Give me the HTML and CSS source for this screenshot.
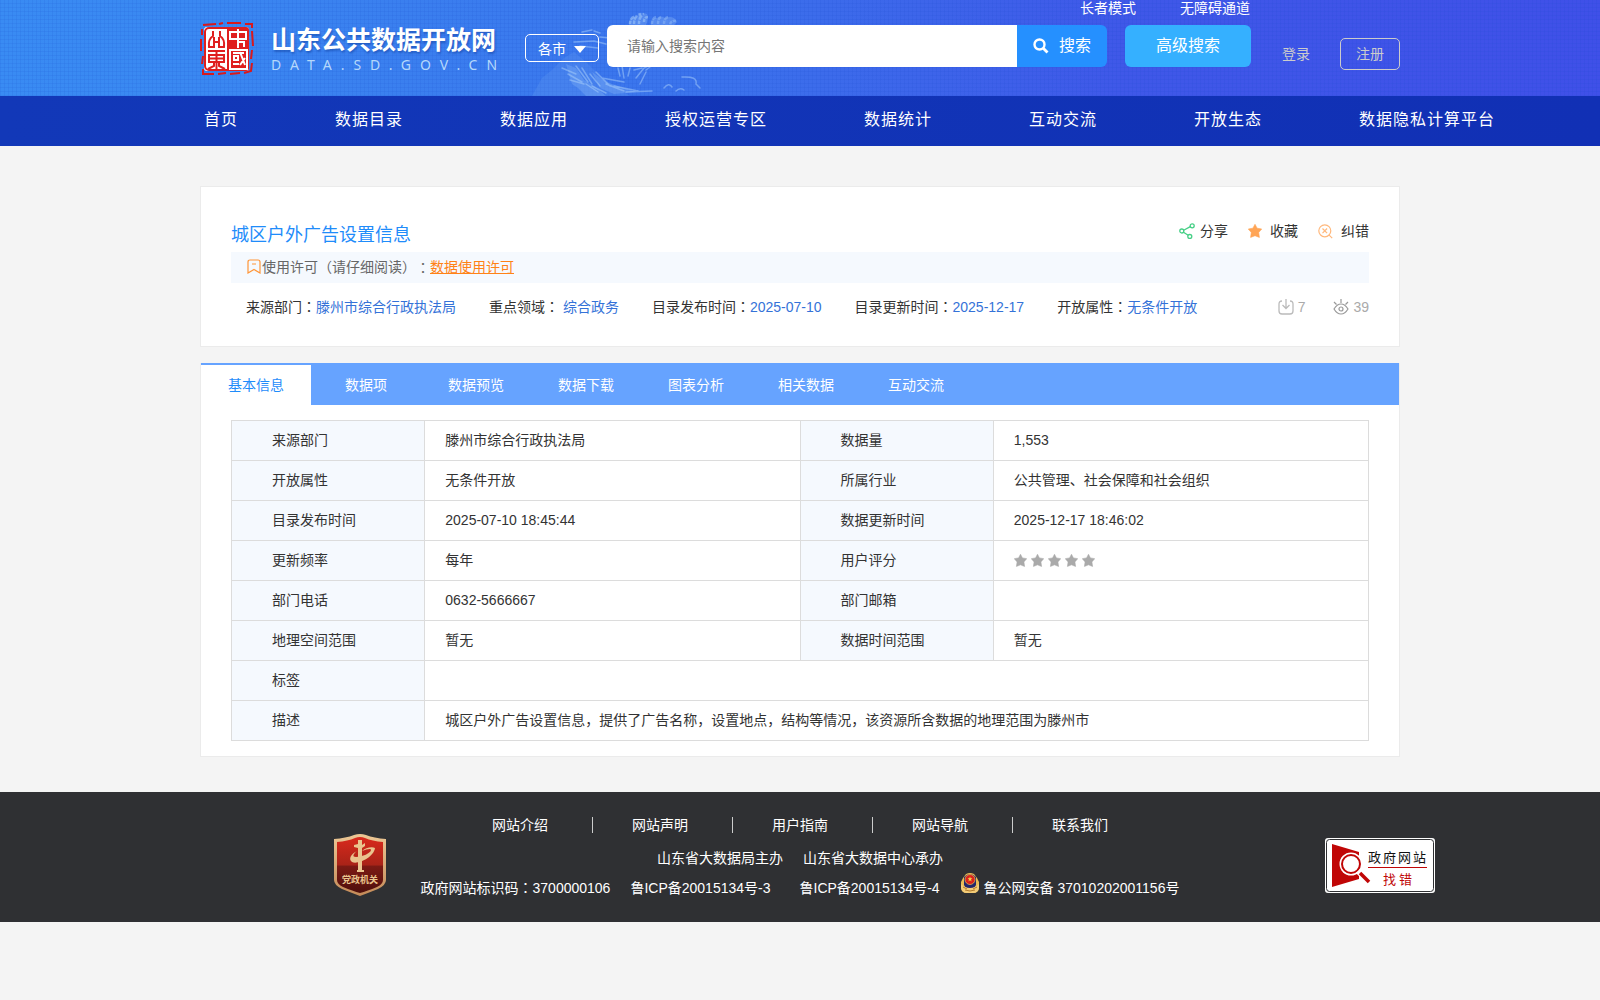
FILE: index.html
```html
<!DOCTYPE html>
<html lang="zh-CN">
<head>
<meta charset="utf-8">
<title>城区户外广告设置信息 - 山东公共数据开放网</title>
<link rel="stylesheet" href="styles.css">
</head>
<body>
<svg class="defs" width="0" height="0" aria-hidden="true">
  <symbol id="star" viewBox="0 0 14 14"><path d="M7 0.300 9.100 4.200 13.700 5 10.700 8.500 11.400 13.400 7 11.700 2.600 13.400 3.300 8.500 0.300 5 4.900 4.200z" stroke="currentColor" stroke-width=".6" stroke-linejoin="round"/></symbol>
</svg>

<header class="site-header">
  <svg class="scenery" width="200" height="96" viewBox="0 0 200 96" aria-hidden="true">
    <path d="M2 96 12 78 22 70 34 58 44 52 56 62 70 76 84 86 100 96z" fill="#6fa3f2" opacity=".22"/>
    <path d="M36 64l10 4 8 12 10 6 12 10H56l-8-8-6-4zM62 72l14 10 12 4 18 6-22 2-14-6z" fill="#8fbdf8" opacity=".3"/>
    <g fill="none" stroke="#a9d0fb" stroke-width="1.500" opacity=".5" stroke-linecap="round">
      <path d="M32 68l14 6M38 74l14 8M40 80l14 4M46 66l12 16M52 68l10 16M56 84l12 8M60 74l10 12M62 86l14 7M66 72l14 14M72 78l22 4M76 84l18 7M84 86l24 5M96 92l26-1M88 68l2 8M92 66l2 12M100 68l-2 8M104 70l8-2M106 78l8-10 4-2M110 84l6-12M116 70l4-3M52 32l10-2M64 31l6 2M44 42l20-1 12 3M50 46l18 2M70 37l10 1"/>
      <path d="M134 88q5-6 8-1M146 91q4-4 8-1M152 77q16-1 14 7l4 4"/>
    </g>
    <g fill="#a9d0fb" opacity=".25"><path d="M99 25q0-8 7-8 4-6 11-3 2 4-1 11zM121 25q0-8 6-7 4-3 8 0 9-3 12 4l-3 3z"/></g>
    <g fill="none" stroke="#a9d0fb" stroke-width="2.500" stroke-dasharray="3 1 5 2" opacity=".5">
      <path d="M100 24q0-7 6-8M104 24q0-9 7-10M109 24q0-8 5-10M114 22q0-5 4-5"/>
      <path d="M122 24q0-6 4-7M128 24q0-6 3-7M134 24q0-6 4-7M140 24q2-4 6-3" opacity=".7"/>
    </g>
  </svg>
  <div class="header-inner">
    <a class="brand" href="#" aria-label="山东公共数据开放网">
      <svg width="54" height="54" viewBox="0 0 54 54" aria-hidden="true">
        <path d="M3 3l13-1M19 2l4-1M27 1h14M45 2h7v4M52 9l1 15M52 28l-1 9M52 41l-1 8-7 2M40 51l-10 1M26 51l-8 1M14 52H3v-5M2 42l1-8M1 29V17M2 13V7" fill="none" stroke="#d9191c" stroke-width="2"/>
        <rect x="4" y="5" width="45" height="44" rx="3" fill="#fff"/>
        <path d="M27 5h19q3 0 3 3v38q0 3-3 3H27z" fill="#df1f1f"/>
        <g fill="none" stroke="#df1f1f" stroke-width="2">
          <rect x="5" y="6" width="43" height="42" rx="4"/>
          <path d="M13 9v5q-5 3-4 11h5V15M20 9v5q5 3 4 11h-5V15M14 20h5M16.500 28v19M8 29h17M9 33h15v7H9zM9 36.500h15M14 41v3l-6 3M19 41v3l6 3"/>
        </g>
        <g fill="none" stroke="#fff" stroke-width="2">
          <path d="M29 10h18M30 10v7h16v-7M38 7v19M38 20h6v5M30 47V28h17v19zM33 31h11M34 34h4v4h-4zM33 42h6M40 30l5 13M45 36l-5 7"/>
        </g>
      </svg>
      <span class="brand-text">
        <span class="brand-name">山东公共数据开放网</span>
        <span class="brand-domain">DATA.SD.GOV.CN</span>
      </span>
    </a>
    <button class="city" type="button">各市<svg width="12" height="7" viewBox="0 0 12 7" aria-hidden="true"><path d="M0 0h12L6 7z" fill="#fff"/></svg></button>
    <div class="search-area">
      <div class="assist"><a href="#">长者模式</a><a href="#">无障碍通道</a></div>
      <form class="search">
        <input type="text" placeholder="请输入搜索内容" aria-label="搜索内容">
        <button class="search-go" type="button"><svg width="16" height="16" viewBox="0 0 16 16" fill="none" stroke="#fff" aria-hidden="true"><circle cx="6.500" cy="6.500" r="5" stroke-width="2.400"/><path d="M10.500 10.500 14.500 14.500" stroke-width="2.800"/></svg>搜索</button>
        <button class="search-adv" type="button">高级搜索</button>
      </form>
    </div>
    <div class="account"><a href="#">登录</a><a class="register" href="#">注册</a></div>
  </div>
</header>

<nav class="site-nav">
  <div class="nav-inner">
    <a href="#">首页</a><a href="#">数据目录</a><a href="#">数据应用</a><a href="#">授权运营专区</a><a href="#">数据统计</a><a href="#">互动交流</a><a href="#">开放生态</a><a href="#">数据隐私计算平台</a>
  </div>
</nav>

<main class="content">
  <section class="card summary">
    <div class="summary-head">
      <h1>城区户外广告设置信息</h1>
      <div class="actions">
        <a href="#"><svg width="16" height="16" viewBox="0 0 16 16" fill="none" stroke="#46cf86" stroke-width="1.300" aria-hidden="true"><circle cx="2.800" cy="8" r="2"/><circle cx="13.200" cy="2.800" r="2"/><circle cx="10.800" cy="13.500" r="2"/><path d="M4.700 7.300 11.300 3.600M4.500 9.200 9.200 12.300"/></svg>分享</a>
        <a class="wide" href="#"><svg class="fav" width="14" height="14" aria-hidden="true"><use href="#star"/></svg>收藏</a>
        <a class="wide" href="#"><svg width="15" height="15" viewBox="0 0 15 15" fill="none" stroke="#ffb87c" stroke-width="1.200" aria-hidden="true"><circle cx="6.800" cy="6.800" r="6"/><path d="M4.500 4.500l4.600 4.600M9.100 4.500 4.500 9.100M11.200 11.200l3 3"/></svg>纠错</a>
      </div>
    </div>
    <p class="license"><svg width="14" height="15" viewBox="0 0 14 15" fill="none" stroke="#ff9537" stroke-width="1.200" aria-hidden="true"><path d="M1 14V3q0-2 2-2h8q2 0 2 2v11L7 10.500zM5 5h4"/></svg>使用许可（请仔细阅读）<i lang="zh-TW">：</i><a href="#">数据使用许可</a></p>
    <div class="meta">
      <span>来源部门<i lang="zh-TW">：</i><b>滕州市综合行政执法局</b></span>
      <span>重点领域<i lang="zh-TW">：</i> <b>综合政务</b></span>
      <span>目录发布时间<i lang="zh-TW">：</i><b>2025-07-10</b></span>
      <span>目录更新时间<i lang="zh-TW">：</i><b>2025-12-17</b></span>
      <span>开放属性<i lang="zh-TW">：</i><b>无条件开放</b></span>
      <div class="counts">
        <span><svg width="16" height="16" viewBox="0 0 16 16" fill="none" stroke="#bbb" stroke-width="1.300" aria-hidden="true"><path d="M4 2Q1 2 1 5v7q0 3 3 3h8q3 0 3-3V5q0-3-3-3M8 0v9M4.500 6 8 9.500 11.500 6"/></svg>7</span>
        <span><svg width="16" height="16" viewBox="0 0 16 16" fill="none" stroke="#999" stroke-width="1.200" aria-hidden="true"><path d="M1 10q3-5 7-5t7 5q-3 5-7 5t-7-5zM8 0v4M1 3l2.500 2.500M15 3l-2.500 2.500"/><circle cx="8" cy="10" r="2"/></svg>39</span>
      </div>
    </div>
  </section>

  <section class="card detail">
    <div class="tabs" role="tablist">
      <button class="active" type="button" role="tab" aria-selected="true">基本信息</button><button type="button" role="tab">数据项</button><button type="button" role="tab">数据预览</button><button type="button" role="tab">数据下载</button><button type="button" role="tab">图表分析</button><button type="button" role="tab">相关数据</button><button type="button" role="tab">互动交流</button>
    </div>
    <table>
      <tr><th>来源部门</th><td>滕州市综合行政执法局</td><th>数据量</th><td>1,553</td></tr>
      <tr><th>开放属性</th><td>无条件开放</td><th>所属行业</th><td>公共管理、社会保障和社会组织</td></tr>
      <tr><th>目录发布时间</th><td>2025-07-10 18:45:44</td><th>数据更新时间</th><td>2025-12-17 18:46:02</td></tr>
      <tr><th>更新频率</th><td>每年</td><th>用户评分</th><td><div class="stars"><svg><use href="#star"/></svg><svg><use href="#star"/></svg><svg><use href="#star"/></svg><svg><use href="#star"/></svg><svg><use href="#star"/></svg></div></td></tr>
      <tr><th>部门电话</th><td>0632-5666667</td><th>部门邮箱</th><td></td></tr>
      <tr><th>地理空间范围</th><td>暂无</td><th>数据时间范围</th><td>暂无</td></tr>
      <tr><th>标签</th><td colspan="3"></td></tr>
      <tr><th>描述</th><td colspan="3">城区户外广告设置信息，提供了广告名称，设置地点，结构等情况，该资源所含数据的地理范围为滕州市</td></tr>
    </table>
  </section>
</main>

<footer class="site-footer">
  <a class="party" href="#" aria-label="党政机关">
    <svg width="52" height="64" viewBox="0 0 52 64">
      <defs>
        <linearGradient id="red" x1="0" y1="0" x2="0" y2="1"><stop offset="0" stop-color="#d9291c"/><stop offset=".5" stop-color="#a92318"/><stop offset=".52" stop-color="#7c1a14"/><stop offset="1" stop-color="#4e0f0c"/></linearGradient>
        <linearGradient id="gold" x1="0" y1="0" x2="0" y2="1"><stop offset="0" stop-color="#ecc795"/><stop offset="1" stop-color="#c48a58"/></linearGradient>
      </defs>
      <path d="M0 6Q12 5 20 2q6-2 12 0 8 3 20 4v41q0 5-8 9-10 4-18 7-8-3-18-7-8-4-8-9z" fill="url(#gold)"/>
      <path d="M3 9Q14 8 21 5q5-2 10 0 7 3 18 4v38q0 4-6 7-10 4-17 6-7-2-17-6-6-3-6-7z" fill="url(#red)"/>
      <path d="M24 7h4v5l3-2v3l-3 2v22h2v2h-7v-2h1V15l-4-1v-2l4-1z" fill="#eac48e"/>
      <path d="M41 15c-3-2-10 0-13 3 5-2 9-3 9-1 0 3-9 7-15 7-4 0-3-3 1-6-6 3-9 8-5 11 6 3 22-5 23-14z" fill="#eac48e"/>
      <text x="26" y="50" text-anchor="middle" class="party-text">党政机关</text>
    </svg>
  </a>
  <div class="footer-main">
    <div class="footer-links"><a href="#">网站介绍</a><a href="#">网站声明</a><a href="#">用户指南</a><a href="#">网站导航</a><a href="#">联系我们</a></div>
    <div class="organizers"><span>山东省大数据局主办</span><span>山东省大数据中心承办</span></div>
    <div class="records">
      <span>政府网站标识码<i lang="zh-TW">：</i>3700000106</span>
      <a href="#">鲁ICP备20015134号-3</a>
      <a class="icp" href="#">鲁ICP备20015134号-4</a>
      <a class="police" href="#"><svg width="20" height="20" viewBox="0 0 20 20" aria-hidden="true"><path d="M6 1q4-2 8 0l3 4 2 4v5q0 6-6 6H7q-6 0-6-6V9l2-4z" fill="#e9bd57"/><path d="M4 4q6-6 12 0v8q-2 4-6 4t-6-4z" fill="#24286b"/><circle cx="10" cy="6.500" r="5" fill="#d9221c" stroke="#f0c750" stroke-width=".7"/><path d="M10 3.500l.6 1.800h1.800l-1.400 1.200.6 1.900L10 7.300 8.400 8.400l.6-1.900-1.400-1.200h1.800z" fill="#f5d648"/><path d="M1 11q4 4 9 4t9-4v4q-1 5-6 5H7q-5 0-6-5z" fill="#f3cc78"/><path d="M5 17q5 2 10 0M3 14l4 2M17 14l-4 2" fill="none" stroke="#b27a2c"/></svg>鲁公网安备 37010202001156号</a>
    </div>
  </div>
  <a class="report" href="#" aria-label="政府网站找错">
    <svg width="110" height="55" viewBox="0 0 110 55">
      <rect width="110" height="55" rx="3" fill="#fff"/>
      <rect x="1.500" y="1.500" width="107" height="52" rx="3" fill="none" stroke="#2f3033"/>
      <path d="M7 6l27 8v27L7 49z" fill="#c00606"/>
      <circle cx="26" cy="26" r="11.500" fill="#fff"/>
      <circle cx="26" cy="26" r="9" fill="#fff" stroke="#c00606" stroke-width="2"/>
      <path d="M33 33l12 12" stroke="#fff" stroke-width="6"/>
      <path d="M35 35l9 9" stroke="#c00606" stroke-width="3.500"/>
      <path d="M43 29.500h59" stroke="#c00606"/>
      <text x="43" y="24" class="report-a">政府网站</text>
      <text x="58" y="46" class="report-b">找错</text>
    </svg>
  </a>
</footer>
</body>
</html>
```
FILE: styles.css
```css
* { box-sizing: border-box; }
body {
  margin: 0;
  background: #f4f4f4;
  color: #333;
  font: 14px/20px "Liberation Sans", "Noto Sans CJK SC", sans-serif;
  text-spacing-trim: space-all;
}
a { color: inherit; text-decoration: none; }
button, input { font: inherit; border: 0; padding: 0; margin: 0; }
button { cursor: pointer; }
svg { display: block; flex: none; }
/* full-width colon set in the middle of its box */
i { font-family: "Noto Sans CJK TC", sans-serif; font-style: normal; line-height: 1; }
.defs { position: absolute; }

.site-header {
  position: relative;
  height: 96px;
  color: #fff;
  background:
    repeating-linear-gradient(0deg, rgba(20, 70, 200, .1) 0 1px, transparent 1px 4px),
    repeating-linear-gradient(90deg, rgba(20, 70, 200, .1) 0 1px, transparent 1px 4px),
    linear-gradient(90deg, #398bf3 0%, #3a88f1 12%, #3b72ec 45%, #3f58e8 70%, #3f50e8 100%);
}
.scenery { position: absolute; left: calc(50% - 270px); top: 0; }
.header-inner {
  position: relative;
  display: flex;
  max-width: 1200px;
  margin: 0 auto;
}
.brand { display: flex; gap: 17px; margin-top: 22px; width: 325px; }
.brand-text { display: flex; flex-direction: column; }
.brand-name { font-size: 25px; line-height: 36px; font-weight: 700; text-shadow: 1px 2px 2px rgba(10, 50, 140, .4); white-space: nowrap; }
.brand-domain { font: 14px/14px "Noto Sans", sans-serif; letter-spacing: 9px; color: #b5d8fb; white-space: nowrap; }
.city {
  display: flex;
  align-items: center;
  justify-content: center;
  gap: 8px;
  width: 74px;
  height: 28px;
  margin: 34px 8px 0 0;
  padding-top: 2px;
  border: 1px solid #fff;
  border-radius: 5px;
  background: transparent;
  color: #fff;
}
.assist { display: flex; justify-content: flex-end; gap: 44px; height: 25px; padding-right: 1px; line-height: 17px; }
.search { display: flex; width: 644px; height: 42px; font-size: 16px; }
.search input { flex: 1; min-width: 0; padding: 0 20px; border-radius: 6px 0 0 6px; background: #fff; font-size: 14px; outline: 0; }
.search input::placeholder { color: #757575; }
.search button { color: #fff; }
.search-go { display: flex; align-items: center; justify-content: center; gap: 10px; width: 90px; background: #2590ff; border-radius: 0 6px 6px 0; }
.search-adv { width: 126px; margin-left: 18px; background: #35b0ff; border-radius: 6px; }
.account { display: flex; align-items: center; justify-content: space-between; flex: 1; height: 32px; margin: 38px 0 0 31px; color: #ccc; }
.register { width: 60px; border: 1px solid #ccc; border-radius: 5px; line-height: 30px; text-align: center; }

.site-nav { background: linear-gradient(90deg, #1238b8, #1130b5); height: 50px; }
.nav-inner { display: flex; gap: 97px; max-width: 1200px; margin: 0 auto; padding-left: 4px; color: #fff; font-size: 16px; line-height: 48px; letter-spacing: 1px; white-space: nowrap; }

.content { max-width: 1200px; margin: 40px auto 35px; }
.card { background: #fff; border: 1px solid #ebebeb; }
.summary { padding: 35px 30px 29px; margin-bottom: 16px; }
.summary-head { display: flex; justify-content: space-between; height: 30px; }
h1 { margin: 0; font-size: 18px; font-weight: 400; line-height: 27px; color: #1f8cfa; }
.actions { display: flex; align-items: flex-start; gap: 20px; line-height: 18px; }
.actions a { display: flex; align-items: center; gap: 5px; }
.actions .wide { gap: 8px; }
.fav { color: #ffa556; fill: #ffa556; }
.license { display: flex; align-items: center; margin: 0; height: 31px; padding: 0 15px 2px; background: #f5f9fe; color: #666; }
.license svg { margin: 0 1px; }
.license a { color: #ff8217; text-decoration: underline; }
.meta { display: flex; gap: 33px; height: 34px; padding: 14px 0 0 15px; white-space: pre; }
.meta b { font-weight: 400; color: #3472d8; }
.counts { display: flex; gap: 28px; margin-left: auto; color: #aaa; }
.counts span { display: flex; align-items: center; gap: 4px; }

.detail { border-top: 0; padding-bottom: 15px; }
.tabs { display: flex; height: 42px; background: #66a3ff; }
.tabs button { width: 110px; border-top: 2px solid #66a3ff; background: transparent; color: #fff; }
.tabs .active { background: #fff; color: #1f8cfa; }
table { width: calc(100% - 60px); margin: 15px 30px 0; border-collapse: collapse; table-layout: fixed; }
th, td { height: 40px; padding: 0 20px 1px; border: 1px solid #dcdcdc; text-align: left; font-weight: 400; }
th { width: 17%; padding-left: 40px; background: #f5f9fe; }
.stars { display: flex; gap: 4px; color: #aaa; fill: #aaa; }
.stars svg { width: 13px; height: 13px; }

.site-footer {
  display: grid;
  grid-template-columns: 1fr auto 1fr;
  padding: 23px 0 24px;
  background: #2f3033;
  color: #fff;
  white-space: nowrap;
}
.party { justify-self: end; margin: 18px 35px 0 0; }
.party-text { font: 700 9px "Noto Sans CJK SC", sans-serif; fill: #eac48e; }
.report { justify-self: start; margin: 23px 0 0 146px; }
.report-a { font: 13px "Noto Sans CJK SC", sans-serif; fill: #111; letter-spacing: 2px; }
.report-b { font: 13px "Noto Sans CJK SC", sans-serif; fill: #c00606; letter-spacing: 3px; }
.footer-links { display: flex; justify-content: center; line-height: 20px; }
.footer-links a { position: relative; width: 140px; text-align: center; }
.footer-links a + a::before { content: ""; position: absolute; left: 2px; top: 2px; width: 1px; height: 16px; background: #ccc; }
.organizers { display: flex; justify-content: center; gap: 20px; margin-top: 13px; }
.records { display: flex; align-items: flex-end; gap: 20px; height: 20px; margin-top: 10px; }
.icp { margin-left: 9px; }
.police { display: flex; align-items: flex-end; gap: 4px; }
.police svg { margin-bottom: 5px; }
```
